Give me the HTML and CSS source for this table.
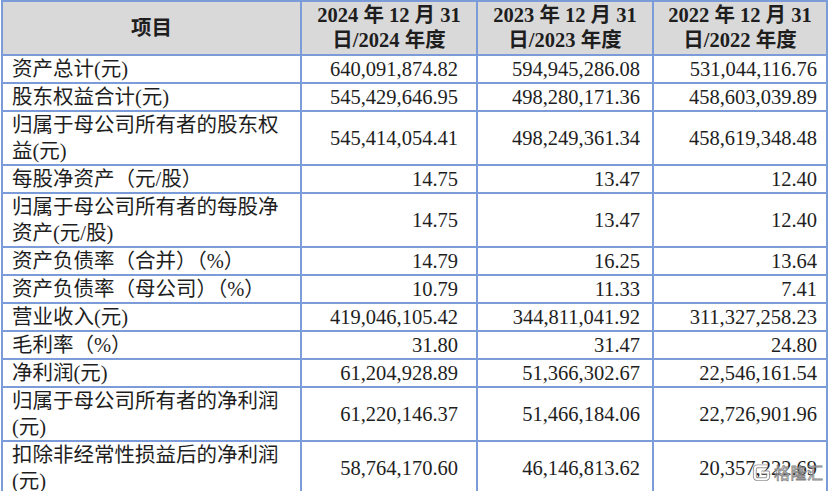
FILE: index.html
```html
<!DOCTYPE html>
<html lang="zh-CN">
<head>
<meta charset="utf-8">
<title>主要财务数据</title>
<link rel="stylesheet" href="styles.css">
</head>
<body>
<div class="page">
<table class="fin">
<colgroup><col class="c1"><col class="c2"><col class="c3"><col class="c4"></colgroup>
<thead>
<tr class="h">
<th>项目</th>
<th>2024 年 12 月 31<br>日/2024 年度</th>
<th>2023 年 12 月 31<br>日/2023 年度</th>
<th>2022 年 12 月 31<br>日/2022 年度</th>
</tr>
</thead>
<tbody>
<tr class="r1"><td class="lbl">资产总计(元)</td><td class="n2">640,091,874.82</td><td class="n3">594,945,286.08</td><td class="n4">531,044,116.76</td></tr>
<tr class="r1"><td class="lbl">股东权益合计(元)</td><td class="n2">545,429,646.95</td><td class="n3">498,280,171.36</td><td class="n4">458,603,039.89</td></tr>
<tr class="r2"><td class="lbl">归属于母公司所有者的股东权<br>益(元)</td><td class="n2">545,414,054.41</td><td class="n3">498,249,361.34</td><td class="n4">458,619,348.48</td></tr>
<tr class="r1"><td class="lbl">每股净资产（元/股）</td><td class="n2">14.75</td><td class="n3">13.47</td><td class="n4">12.40</td></tr>
<tr class="r2"><td class="lbl">归属于母公司所有者的每股净<br>资产(元/股)</td><td class="n2">14.75</td><td class="n3">13.47</td><td class="n4">12.40</td></tr>
<tr class="r0"><td class="lbl">资产负债率（合并）（%）</td><td class="n2">14.79</td><td class="n3">16.25</td><td class="n4">13.64</td></tr>
<tr class="r0"><td class="lbl">资产负债率（母公司）（%）</td><td class="n2">10.79</td><td class="n3">11.33</td><td class="n4">7.41</td></tr>
<tr class="r1"><td class="lbl">营业收入(元)</td><td class="n2">419,046,105.42</td><td class="n3">344,811,041.92</td><td class="n4">311,327,258.23</td></tr>
<tr class="r1"><td class="lbl">毛利率（%）</td><td class="n2">31.80</td><td class="n3">31.47</td><td class="n4">24.80</td></tr>
<tr class="r1"><td class="lbl">净利润(元)</td><td class="n2">61,204,928.89</td><td class="n3">51,366,302.67</td><td class="n4">22,546,161.54</td></tr>
<tr class="r2"><td class="lbl">归属于母公司所有者的净利润<br>(元)</td><td class="n2">61,220,146.37</td><td class="n3">51,466,184.06</td><td class="n4">22,726,901.96</td></tr>
<tr class="r2"><td class="lbl">扣除非经常性损益后的净利润<br>(元)</td><td class="n2">58,764,170.60</td><td class="n3">46,146,813.62</td><td class="n4">20,357,222.69</td></tr>
</tbody>
</table>
<div class="wm">
<svg class="wm-logo" viewBox="0 0 22 22" width="21" height="21" aria-hidden="true">
<path class="o" d="M17 4.5 H7 Q4 4.5 4 7.5 V15 Q4 18 7 18 H15 Q18 18 18 15 V11 H11"/>
<path class="i" d="M17 4.5 H7 Q4 4.5 4 7.5 V15 Q4 18 7 18 H15 Q18 18 18 15 V11 H11"/>
</svg>
<span class="wm-text">格隆汇</span>
</div>
</div>
</body>
</html>
```

FILE: styles.css
```css
html, body {
  margin: 0;
  padding: 0;
  background: #ffffff;
}
.page {
  position: relative;
  width: 828px;
  height: 491px;
  overflow: hidden;
  padding: 0 0 0 1px;
  box-sizing: border-box;
}
.fin {
  border-collapse: collapse;
  table-layout: fixed;
  width: 825px;
  font-family: "Liberation Serif", "Noto Sans CJK SC", serif;
  font-size: 20.5px;
  color: #1e1e1e;
}
.fin col.c1 { width: 299px; }
.fin col.c2 { width: 176px; }
.fin col.c3 { width: 176px; }
.fin col.c4 { width: 174px; }
.fin th, .fin td {
  border: 2px solid #7c9cd9;
  padding: 0;
  line-height: 26px;
  vertical-align: middle;
}
.fin th {
  background: #d9d9d9;
  font-weight: bold;
  text-align: center;
  line-height: 25px;
}
.fin tr.h { height: 54px; }
.fin tr.r1 { height: 28px; }
.fin tr.r0 { height: 27px; }
.fin tr.r2 { height: 54px; }
.fin td.lbl {
  padding-left: 9px;
  text-align: left;
}
.fin td.n2 { text-align: right; padding-right: 18px; }
.fin td.n3 { text-align: right; padding-right: 12px; }
.fin td.n4 { text-align: right; padding-right: 9px; }

.wm {
  position: absolute;
  left: 751px;
  top: 461px;
  display: flex;
  align-items: center;
  gap: 2px;
  opacity: 0.9;
}
.wm-logo .o {
  fill: none;
  stroke: #8a8a8a;
  stroke-width: 4;
  stroke-linejoin: round;
}
.wm-logo .i {
  fill: none;
  stroke: #ffffff;
  stroke-width: 2;
  stroke-linejoin: round;
}
.wm-text {
  font-family: "Noto Sans CJK SC", sans-serif;
  font-size: 16px;
  line-height: 22px;
  color: #ffffff;
  -webkit-text-stroke: 0.8px #7a7a7a;
  letter-spacing: 0.5px;
}
```
